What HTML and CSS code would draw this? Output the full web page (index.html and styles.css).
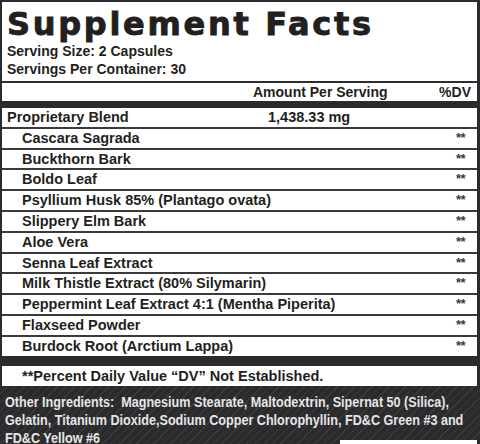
FILE: index.html
```html
<!DOCTYPE html>
<html lang="en">

<head>
    <meta charset="UTF-8">
    <meta name="viewport" content="width=device-width, initial-scale=1.0">
    <title>Supplement Facts</title>
    <link rel="stylesheet" href="styles.css">
</head>

<body>
    <div class="facts">
        <!-- Cabecera -->
        <div class="head">
            <h1>Supplement Facts</h1>
            <p>Serving Size: 2 Capsules</p>
            <p>Servings Per Container: 30</p>
        </div>

        <div class="cols">
            <span class="amount-title">Amount Per Serving</span>
            <span class="dv-title">%DV</span>
        </div>

        <!-- Ingredientes -->
        <div class="row blend">
            <span class="name">Proprietary Blend</span>
            <span class="qty">1,438.33 mg</span>
        </div>
        <div class="row"><span class="name">Cascara Sagrada</span><span class="dv">**</span></div>
        <div class="row"><span class="name">Buckthorn Bark</span><span class="dv">**</span></div>
        <div class="row"><span class="name">Boldo Leaf</span><span class="dv">**</span></div>
        <div class="row"><span class="name">Psyllium Husk 85% (Plantago ovata)</span><span class="dv">**</span></div>
        <div class="row"><span class="name">Slippery Elm Bark</span><span class="dv">**</span></div>
        <div class="row"><span class="name">Aloe Vera</span><span class="dv">**</span></div>
        <div class="row"><span class="name">Senna Leaf Extract</span><span class="dv">**</span></div>
        <div class="row"><span class="name">Milk Thistle Extract (80% Silymarin)</span><span class="dv">**</span></div>
        <div class="row"><span class="name">Peppermint Leaf Extract 4:1 (Mentha Piperita)</span><span class="dv">**</span></div>
        <div class="row"><span class="name">Flaxseed Powder</span><span class="dv">**</span></div>
        <div class="row"><span class="name">Burdock Root (Arctium Lappa)</span><span class="dv">**</span></div>
    </div>

    <div class="note">**Percent Daily Value “DV” Not Established.</div>

    <div class="other">
        <p>Other Ingredients:&nbsp; Magnesium Stearate, Maltodextrin, Sipernat 50 (Silica),<br>
            Gelatin, Titanium Dioxide,Sodium Copper Chlorophyllin, FD&amp;C Green #3 and<br>
            FD&amp;C Yellow #6</p>
        <div class="next"></div>
    </div>
</body>

</html>
```

FILE: styles.css
```css
/* Estilos generales */
body {
    margin: 0;
    background: #2b2b2d;
    color: #231f20;
    font-family: 'Liberation Sans', Arial, sans-serif;
    font-weight: bold;
    overflow: hidden;
}

.facts {
    background: #fff;
    margin: 2px 3px 0 2px;
}

/* Cabecera */
.head {
    padding: 5px 5px 3px;
    border-bottom: 2px solid #2e2e30;
}

.head h1 {
    margin: 0 0 1px;
    font-family: 'DejaVu Sans', sans-serif;
    font-size: 32px;
    line-height: 34px;
    letter-spacing: 2.7px;
    -webkit-text-stroke: 0.9px #231f20;
}

.head p {
    margin: 0;
    font-size: 14px;
    line-height: 18px;
}

.cols {
    display: flex;
    height: 18px;
    line-height: 18px;
    font-size: 14px;
    padding-left: 251px;
    border-bottom: 7px solid #2b2b2d;
}

.dv-title {
    margin-left: auto;
    padding-right: 6px;
}

/* Filas */
.row {
    display: flex;
    justify-content: space-between;
    padding: 0 12px 0 20px;
    font-size: 14.5px;
    line-height: 18.8px;
    border-top: 2px solid #3a3a3c;
}

.row.blend {
    justify-content: flex-start;
    padding-left: 5px;
    border-top: none;
}

.blend .name {
    width: 261px;
}

.dv {
    font-size: 13px;
    line-height: 13px;
    color: #3a3a3a;
    padding-top: 2px;
    letter-spacing: -0.5px;
}

/* Notas */
.note {
    background: #fff;
    margin: 10px 3px 0 2px;
    height: 20px;
    line-height: 20px;
    padding-left: 20px;
    font-size: 14.5px;
}

.other {
    padding: 7px 5px 0;
    background: repeating-linear-gradient(135deg, #2b2b2d 0 5px, #3b3b3d 5px 6px);
    color: #e6e6e6;
}

.other p {
    margin: 0;
    font-size: 14px;
    line-height: 18px;
    white-space: nowrap;
    transform: scaleX(0.9);
    transform-origin: left top;
}

.next {
    background: #fff;
    height: 20px;
    margin: -7px -2px 0 335px;
}
```
